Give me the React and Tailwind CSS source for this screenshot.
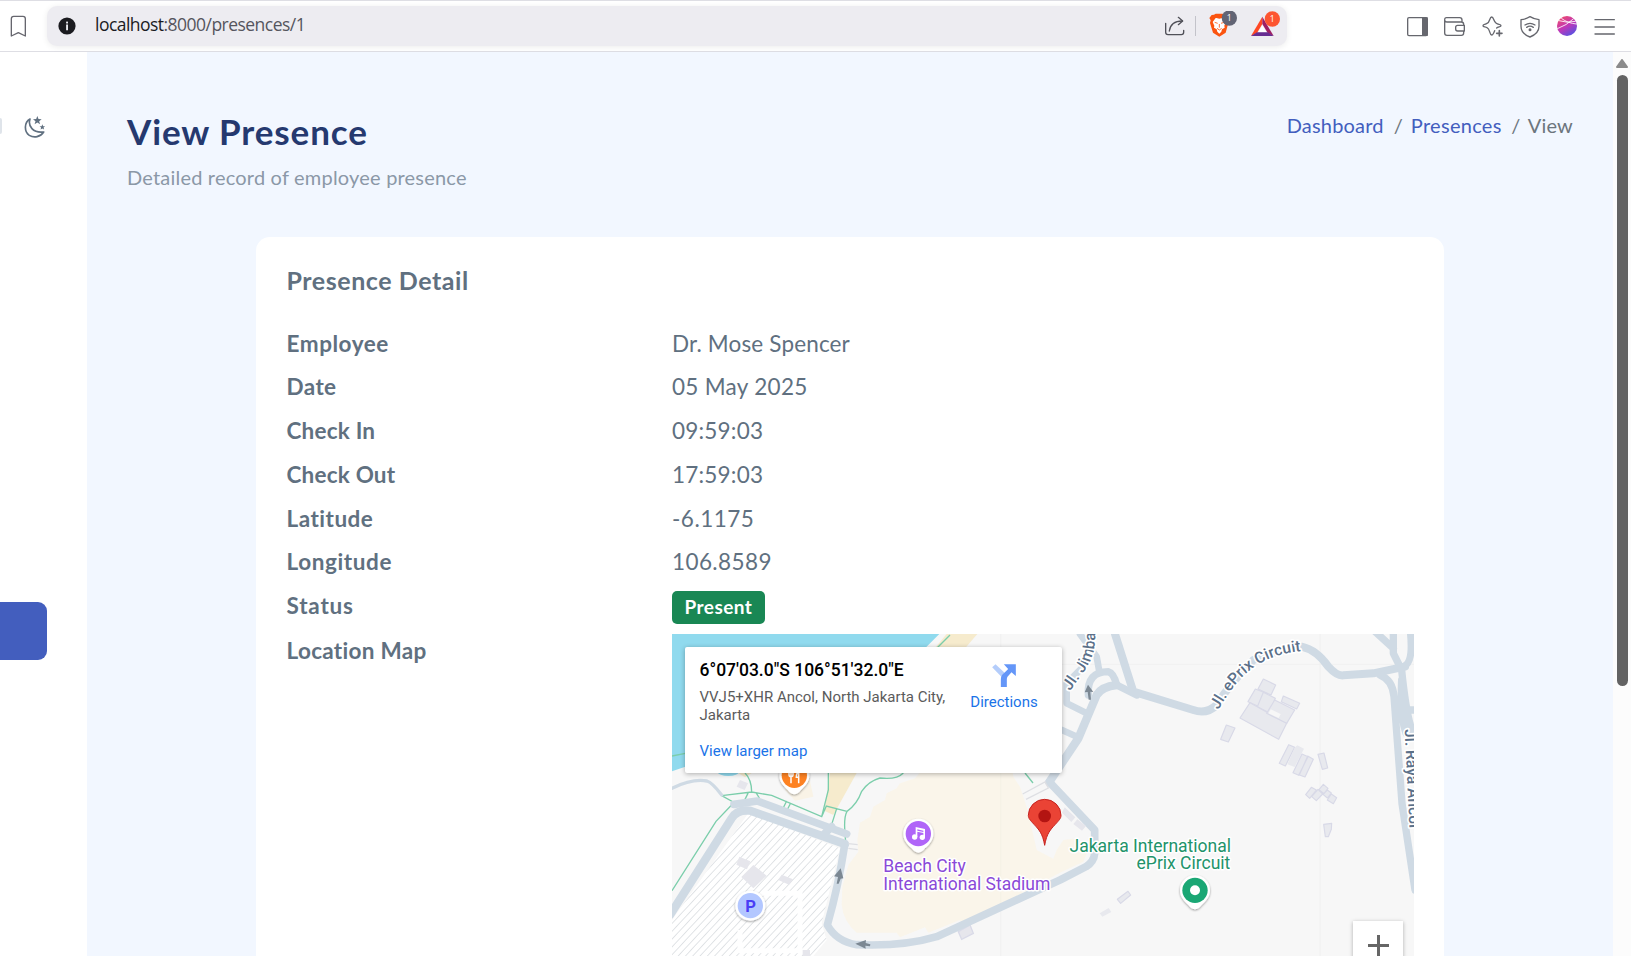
import React from "react";

const rows = [
  ["Employee", "Dr. Mose Spencer", "tracking-[0.55px]", "tracking-[0.15px]"],
  ["Date", "05 May 2025", "tracking-[0.4px]", "tracking-[0.3px]"],
  ["Check In", "09:59:03", "tracking-[0.2px]", "tracking-[0.2px]"],
  ["Check Out", "17:59:03", "tracking-[0.2px]", "tracking-[0.2px]"],
  ["Latitude", "-6.1175", "tracking-[0.5px]", "tracking-[0.5px]"],
  ["Longitude", "106.8589", "tracking-[0.6px]", "tracking-[0.4px]"],
];

function BrowserBar() {
  return (
    <header className="flex h-[52px] shrink-0 items-start border-b border-t border-[#dedee4] bg-white">
      <svg className="ml-2 mt-3 h-[27px] w-[22px]" viewBox="24 39 66 81" fill="none">
        <path d="M34 108V56q0-7 7-7h28q7 0 7 7v52L55 98Z" stroke="#66666e" strokeWidth="4" strokeLinejoin="round" />
      </svg>
      <div className="ml-[17px] mt-[5px] flex h-10 w-[1240px] items-center rounded-[10px] bg-[#edecf1] pr-[6px] shadow-[0_1px_6px_rgba(0,0,0,0.08)]">
        <svg className="ml-[11px] h-[18px] w-[18px]" viewBox="0 0 18 18">
          <circle cx="9" cy="9" r="8.6" fill="#1b1b20" />
          <rect x="8.1" y="4.6" width="1.9" height="1.9" rx=".6" fill="#e8e8ee" />
          <path d="M8.1 7.6H10V13.2H8.1z" fill="#e8e8ee" />
        </svg>
        <span className="mb-[2px] ml-[19px] font-['Open_Sans',sans-serif] text-[17.5px] leading-none tracking-[-0.53px] text-[#55555d]">
          <span className="text-[#1b1b22]">localhost</span>:8000/presences/1
        </span>
        <svg className="ml-auto h-[23px] w-[21px]" viewBox="72 45 63 69" fill="none" stroke="#505058" strokeWidth="4" strokeLinecap="round" strokeLinejoin="round">
          <path d="M77 70V97q0 7 7 7h40q7 0 7-7v-6" />
          <path d="M88 93q4-30 39-30" />
          <path d="M115 52l13 11-13 11" />
        </svg>
        <span className="ml-[10px] h-5 w-px bg-[#c3c3ca]" />
        <svg className="ml-[12px] h-[30px] w-[30px]" viewBox="204 33 90 90">
          <path d="M222 44l5-3h21l5 3 8 1 5 9-2 7 1 8-8 29-19 12-19-12-9-29 2-8-4-7 7-9Z" fill="#fb5410" />
          <path d="M229 54l9 2 9-2 10 12-4 11 1 6-8 5-2 7-6 6-6-6-2-7-8-5 1-6-5-11 9-12Z" fill="#fff" />
          <path d="M224 67l9 3M252 67l-9 3M238 72v11M231 85l7 5 7-5" stroke="#fb5410" strokeWidth="2.500" fill="none" />
          <circle cx="268" cy="54" r="23" fill="#626474" />
          <text x="268" y="63" textAnchor="middle" fontFamily="Open Sans" fontSize="26" fill="#fff">1</text>
        </svg>
        <svg className="ml-[12px] h-[30px] w-[31px]" viewBox="330 33 93 90">
          <path d="M367 50L333 108l18-9 16-27Z" fill="#ff4724" />
          <path d="M367 50l34 58-18-9-16-27Z" fill="#9e1f63" />
          <path d="M333 108h68l-18-11h-32Z" fill="#662d91" />
          <path d="M367 76l12 20h-24Z" fill="#fff" />
          <circle cx="397" cy="57" r="23" fill="#fd5530" />
          <text x="397" y="66" textAnchor="middle" fontFamily="Open Sans" fontSize="26" fill="#fff">1</text>
        </svg>
      </div>
      <div className="ml-[119px] mt-[14px] flex h-[23px] items-start">
        <svg className="h-[23px] w-[23px]" viewBox="798 45 69 69">
          <rect x="803" y="53" width="59" height="54" rx="4" fill="none" stroke="#66676e" strokeWidth="4" />
          <path d="M846 52h17v56h-17z" fill="#66676e" />
        </svg>
        <svg className="ml-[14px] h-[23px] w-[23px]" viewBox="909 45 69 69" fill="none" stroke="#66676e" strokeWidth="4" strokeLinejoin="round">
          <path d="M914 61V99q0 7 7 7h43q7 0 7-7V73q0-7-7-7H921q-7 0-7-7t7-6h38q7 0 7 7v5" />
          <path d="M973 76H953q-6 0-6 6v5q0 6 6 6h20Z" fill="#fff" />
        </svg>
        <svg className="ml-[15px] h-[23px] w-[23px]" viewBox="1023 45 69 69" fill="none" stroke="#66676e" strokeWidth="4" strokeLinecap="round" strokeLinejoin="round">
          <path d="M1064 92Q1059 105 1055 105C1048 105 1051 87 1041 83 1035 80 1029 81 1029 77 1029 73 1036 74 1041 70 1051 66 1048 51 1055 51 1062 51 1060 66 1069 70 1074 74 1083 73 1083 77 1083 81 1074 80 1070 84" />
          <path d="M1078 92v16M1070 100h16" strokeWidth="5" />
        </svg>
        <svg className="ml-[15px] h-[24px] w-[23px]" viewBox="1137 42 69 72" fill="none" stroke="#66676e" strokeWidth="4" strokeLinecap="round" strokeLinejoin="round">
          <path d="M1170 47q13 8 27 9v20q0 22-27 32-27-10-27-32V56q14-1 27-9Z" />
          <path d="M1155 72q15-10 30 0M1160 79q10-7 20 0" />
          <circle cx="1170" cy="86" r="2.5" fill="#66676e" />
        </svg>
        <svg className="ml-[14px] h-[22px] w-[22px]" viewBox="1248 45 66 66">
          <defs>
            <linearGradient id="orb" x1="0.2" y1="0" x2="0.8" y2="1">
              <stop offset="0" stopColor="#ef4a6c" />
              <stop offset=".5" stopColor="#bf37b8" />
              <stop offset="1" stopColor="#4c55e6" />
            </linearGradient>
          </defs>
          <circle cx="1281" cy="78" r="30" fill="url(#orb)" />
          <path d="M1252 86Q1280 76 1301 56M1264 55Q1284 70 1310 72M1257 62Q1280 70 1307 64" stroke="#fff" strokeWidth="2.500" fill="none" />
        </svg>
        <svg className="ml-[16px] h-[22px] w-[22px]" viewBox="1362 45 66 66" stroke="#66676e" strokeWidth="4" strokeLinecap="round">
          <path d="M1365 59h58M1365 81h58M1365 102h58" />
        </svg>
      </div>
    </header>
  );
}

function Sidebar() {
  return (
    <aside className="flex w-[87px] shrink-0 flex-col bg-white">
      <div className="mt-16 flex h-[22px] items-start">
        <span className="mt-[2px] h-[16px] w-[2px] rounded-r-[2px] bg-[#dfe4ea]" />
        <svg className="ml-[22px] h-[22px] w-[22px]" viewBox="69 348 66 66">
          <path d="M87 357c-18 10-18 38-2 49 14 9 34 5 43-10-32 4-48-18-41-39Z" fill="none" stroke="#607080" strokeWidth="5" strokeLinejoin="round" />
          <path d="M109 348l3.500 9 9.500 .5-7.500 6 2.700 9-8.200-5-8.200 5 2.700-9-7.500-6 9.500-.5Z" fill="#607080" />
          <path d="M124 373l2.300 5.500 6 .4-4.600 3.900 1.500 5.900-5.200-3.200-5.200 3.200 1.500-5.900-4.600-3.900 6-.4Z" fill="#607080" />
        </svg>
      </div>
      <div className="mt-[464px] h-[58px] w-[47px] rounded-r-[9px] bg-[#435ebe]" />
    </aside>
  );
}

function PoiPin({ x, y, color, children }) {
  return (
    <g transform={`translate(${x} ${y})`}>
      <path d="M-45 0a45 45 0 1 1 90 0c0 20-12 32-25 44q-20 26-40 0c-13-12-25-24-25-44Z" fill="#fff" filter="url(#pinShadow)" />
      <circle r="38" fill={color} />
      {children}
    </g>
  );
}

function MapCanvas() {
  return (
    <svg className="block h-[322px] w-[742px]" viewBox="6 42 2226 966">
      <defs>
        <filter id="pinShadow" x="-30%" y="-30%" width="160%" height="160%">
          <feDropShadow dx="0" dy="3" stdDeviation="3" floodOpacity=".4" />
        </filter>
        <pattern id="hatch" width="16" height="16" patternUnits="userSpaceOnUse" patternTransform="rotate(43)">
          <path d="M0 0V16" stroke="#dcdfe3" strokeWidth="5" />
        </pattern>
        <path id="eprixRoad" d="M1645 270C1700 175 1760 104 1900 93" />
        <path id="jimbaranRoad" d="M1200 214L1245 150C1268 115 1280 80 1274 20V-200" />
        <path id="rayaRoad" d="M2204 328L2222 700" />
      </defs>
      <rect x="6" y="42" width="2226" height="966" fill="#f7f7f7" />
      <path d="M992 42V1008M1950 42V1008M6 133H2232" stroke="#eeeeee" strokeWidth="2" />

      <path d="M830 42H922L700 300 560 459 490 585 463 572 480 459Z" fill="#f6ebcd" />
      <path d="M6 42H808L760 90 300 440 46 440 6 454Z" fill="#90daee" />
      <ellipse cx="175" cy="456" rx="32" ry="12" fill="#90daee" />
      <path d="M205 459H245L225 472Z" fill="#f6ebcd" />
      <path d="M345 459H415L430 530 375 542 345 510Z" fill="#f9f3e6" />

      <path d="M765 440H1026L1030 470 1050 500 1065 545 1075 580 1100 690 1150 716 1160 690 1180 660 1220 655 1255 690 1240 725 1170 758 878 915 870 900 775 938 765 922 690 952 680 938 560 938Q520 905 515 855L517 800 535 735 565 695 562 660 570 608 600 590 610 560 645 540 650 520 680 505 690 490 735 475Z" fill="#faf5ea" />
      <path d="M992 440V850" stroke="#f3eee3" strokeWidth="2" />

      <path d="M235 580L510 685 455 910 470 960 430 1008H6V900Z" fill="#fff" />
      <path d="M235 580L510 685 455 910 470 960 430 1008H6V900Z" fill="url(#hatch)" />
      <path d="M275 820H390V992H210V930" fill="none" stroke="#fff" strokeWidth="15" />
      <g fill="#e6e6ec">
        <path d="M250 735l40 32-40 38-36-34Z" />
        <path d="M208 710l33 14-10 24-32-14Z" />
        <path d="M335 764l34 14-12 16-32-14Z" />
        <path d="M210 480l24 10-10 20-24-10Z" />
        <path d="M398 990h22v18h-22Z" />
      </g>
      <path d="M865 935l35-20 10 25-35 18Z" fill="#e6e6ec" stroke="#d9dae8" strokeWidth="4" />

      <g fill="none" stroke="#7bceab" strokeWidth="4">
        <path d="M6 408l40-8M6 812L138 604l46-48M840 45L780 105" />
        <path d="M155 527l90-11 60 10 150 64 20-80V459M225 459q20 20 20 57M155 527l40 22M235 518l-10 20M258 518l10 16M350 543l-12 24M362 549l-12 24M455 590l14-32 62 16M500 566l-14 44M531 574q-12 20-4 90M531 574q30-20 44-60 20-30 55-40 50 6 70-15M1065 459l24 30" />
      </g>

      <g fill="none" stroke="#cfdae4" strokeLinecap="round" strokeLinejoin="round">
        <path d="M6 505q60-30 105-22 15 4 44 42" strokeWidth="10" />
        <path d="M0 885L185 595Q200 568 240 572L525 672" strokeWidth="25" />
        <path d="M192 553L262 543 530 642M465 640l20-20" strokeWidth="23" />
        <path d="M524 675Q505 800 472 915 500 965 560 974 700 980 800 950L1170 780 1248 740Q1272 725 1274 700V630L1138 486" strokeWidth="23" />
        <path d="M1138 486L1225 355 1280 225Q1295 200 1340 195" strokeWidth="25" />
        <path d="M1255 225Q1250 155 1315 155 1332 160 1340 195L1400 225" strokeWidth="22" />
        <path d="M1335 42L1390 215 1570 270Q1610 284 1640 255 1680 190 1750 120L1820 95 1895 80Q1940 90 1975 140 2000 168 2020 166L2110 160 2205 140" strokeWidth="24" />
        <path d="M1230 42L1280 110 1288 155M1240 140l-50 50V250L1250 280M1176 330l48 22" strokeWidth="20" />
        <path d="M2110 30L2170 85M2170 42V100L2195 150Q2210 300 2232 345M2222 42Q2230 130 2200 140M2130 165Q2168 180 2172 230L2196 550 2235 810M2195 180Q2190 290 2208 340M2208 270H2232" strokeWidth="22" />
      </g>
      <path d="M1058 522l67-36 10 18-67 34M535 671l28 3M535 685l28 4" fill="none" stroke="#dedfe3" strokeWidth="4" />
      <path d="M1184 562l32 30-12 14-28-28ZM1222 598l26 20-12 14-26-20Z" fill="#e6e6ec" />

      <g transform="translate(1140 0)" fill="#e8e9ee" stroke="#d8d9e7" strokeWidth="3.500" strokeLinejoin="round">
        <path d="M640 177l37 18-14 30-39-18Z" />
        <path d="M616 207l36 14-22 40-36-16Z" />
        <path d="M640 217l36 18-18 43-36-18Z" />
        <path d="M600 248l110 62-24 48-116-64Z" />
        <path d="M674 240l60 30-24 40-60-30ZM700 228l49 22-9 17-46-22Z" />
        <path d="M662 268l30 14-6 12-30-14Z" fill="#f7f7f7" stroke="none" />
        <path d="M529 315l26 9-20 42-23-8Z" />
        <path d="M716 374l18 8-28 56-18-8Z" />
        <path d="M742 376l20 10-28 55-22-8 22-50Z" stroke="none" />
        <path d="M756 402l18 8-28 56-17-8ZM773 408l17 10-25 53-17-6Z" />
        <path d="M804 403l18-4 11 45-16 4Z" />
        <path d="M784 502l15 8-20 25-12-11ZM804 508l14 14-19 20-14-12ZM820 493l14 12-12 16-15-12ZM832 510l12 9-12 15-13-11ZM844 522l16 11-10 18-18-11Z" />
        <path d="M821 613l24-3-1 18-9 22h-9Z" />
        <path d="M234 814l8 11-30 25-10-12Z" />
        <path d="M176 864l8 12-27 14-8-10Z" stroke="none" />
      </g>

      <g fill="#7c8893">
        <path d="M512 745l8 30-8 1-6 15h-6l4-20-12-2ZM556 971l32-11-1 9 14 4-1 6-14-2 1 9Z" />
        <path d="M1254 194l16 22-9-1 2 24h-7l-3-23-9 1Z" />
      </g>

      <g fontFamily="Roboto, sans-serif" fontWeight="500" fontSize="47" fill="#5b7089" stroke="#fff" strokeWidth="10" strokeLinejoin="round" paintOrder="stroke">
        <text><textPath href="#eprixRoad">Jl. ePrix Circuit</textPath></text>
        <text letterSpacing=".5"><textPath href="#jimbaranRoad">Jl. Jimbaran</textPath></text>
        <text><textPath href="#rayaRoad">Jl. Raya Ancol</textPath></text>
      </g>

      <PoiPin x={373} y={466} color="#fd8222">
        <path d="M-16-14v12q0 6 6 6v20M-10-14v16M-4-14v12q0 6-6 6M13 24V-10q-7 2-7 16h7" fill="none" stroke="#fff" strokeWidth="4.500" />
      </PoiPin>
      <PoiPin x={745} y={641} color="#b065f8">
        <g fill="#fff">
          <circle cx="-11" cy="10" r="8" />
          <circle cx="12" cy="11" r="8" />
          <path fillRule="evenodd" d="M-8 10V-20L20-14V11H15V-2L-3-6V10ZM-3-13V-9L15-5V-9Z" />
        </g>
      </PoiPin>
      <PoiPin x={1575} y={811} color="#1aa774">
        <circle r="15" fill="#fff" />
      </PoiPin>
      <g>
        <circle cx="241" cy="857" r="45" fill="#fff" filter="url(#pinShadow)" />
        <circle cx="241" cy="857" r="38" fill="#b3c7ff" />
        <text x="242" y="875" textAnchor="middle" fontFamily="Roboto, sans-serif" fontWeight="700" fontSize="50" fill="#4a3df5">P</text>
      </g>
      <path d="M1124 676C1118 640 1106 628 1092 613 1080 600 1075 595 1075 586A49 48 0 0 1 1173 586C1173 595 1168 600 1156 613 1142 628 1130 640 1124 676Z" fill="#ea4335" stroke="#c5221f" strokeWidth="3" />
      <circle cx="1124" cy="588" r="19" fill="#b31412" />

      <g fontFamily="Roboto, sans-serif" fontSize="52.500" stroke="#fff" strokeWidth="9" strokeLinejoin="round" paintOrder="stroke">
        <text x="640" y="756" fill="#8a49d8">Beach City</text>
        <text x="640" y="810" fill="#8a49d8" textLength="501">International Stadium</text>
        <text x="1683" y="696" textAnchor="end" fill="#22936a">Jakarta International</text>
        <text x="1681" y="748" textAnchor="end" fill="#22936a">ePrix Circuit</text>
      </g>
    </svg>
  );
}

function LocationMap() {
  return (
    <div className="relative h-[322px] w-[742px] overflow-hidden font-['Roboto',sans-serif] tracking-normal">
      <MapCanvas />
      <div className="absolute left-[13px] top-[13px] flex h-[126px] w-[377px] rounded-[2px] bg-white shadow-[0_1px_5px_rgba(0,0,0,0.3)]">
        <div className="w-[262px] shrink-0 pl-[14.500px] pt-[12px]">
          <div className="whitespace-nowrap text-[17.5px] font-medium leading-[22px] text-black">6°07'03.0"S 106°51'32.0"E</div>
          <div className="mt-[7px] whitespace-nowrap text-[15px] leading-[18px] text-[#5b5b5b]">
            VVJ5+XHR Ancol, North Jakarta City,
            <br />
            Jakarta
          </div>
          <div className="mt-[18px] text-[15px] leading-[18px] text-[#1a73e8]">View larger map</div>
        </div>
        <div className="ml-[16px] flex w-[82px] flex-col items-center pt-[15px]">
          <svg className="h-[27px] w-[27px]" viewBox="963.5 126 81 81">
            <path d="M967 142l10-9 32 30-10 12Z" fill="#b4cdfb" />
            <path d="M993 201V179q0-13 10-20l12-12-13-14h36v35l-13-11-12 13q-2 3-2 8v23Z" fill="#6496f8" />
          </svg>
          <span className="mt-[4px] text-[15px] leading-[18px] text-[#1a73e8]">Directions</span>
        </div>
      </div>
      <div className="absolute left-[681px] top-[287px] flex h-[50px] w-[50px] items-center justify-center bg-white shadow-[0_1px_4px_rgba(0,0,0,0.3)]">
        <span className="absolute h-[3px] w-[21px] bg-[#666]" />
        <span className="absolute h-[21px] w-[3px] bg-[#666]" />
      </div>
    </div>
  );
}

export default function App() {
  return (
    <div className="flex h-[956px] w-[1631px] flex-col overflow-hidden bg-white font-['Lato',sans-serif]">
      <BrowserBar />
      <div className="flex min-h-0 flex-1">
        <Sidebar />
        <main className="flex w-[1526px] shrink-0 flex-col bg-[#f2f7ff] pl-10 pr-[40px]">
          <div className="flex items-start justify-between pt-[58px]">
            <div>
              <h1 className="text-[35px] font-bold leading-[42px] tracking-[0.9px] text-[#25396f]">View Presence</h1>
              <p className="mt-[10px] text-[20px] leading-[30px] tracking-[0.2px] text-[#8b98a7]">Detailed record of employee presence</p>
            </div>
            <nav className="flex text-[20px] leading-[30px] tracking-[0.2px] text-[#6c757d]">
              <a className="text-[#435ebe]">Dashboard</a>
              <span className="mx-[10px] w-[7px] text-center">/</span>
              <a className="tracking-[0.3px] text-[#435ebe]">Presences</a>
              <span className="mx-[9.500px] w-[7px] text-center">/</span>
              <span>View</span>
            </nav>
          </div>
          <section className="ml-[129px] mt-[45px] h-[760px] w-[1188px] shrink-0 rounded-t-[14px] bg-white px-[31px] pt-[28px] text-[22.5px] leading-[33.75px] text-[#607080]">
            <h2 className="-ml-[0.5px] text-[25px] font-bold leading-[30px] tracking-[0.55px]">Presence Detail</h2>
            <dl className="mt-[31.500px]">
              {rows.map(([label, value, ls, vs]) => (
                <div key={label} className="mb-[10px] flex">
                  <dt className={`-ml-[0.5px] w-[385.5px] shrink-0 font-bold ${ls}`}>{label}</dt>
                  <dd className={vs}>{value}</dd>
                </div>
              ))}
              <div className="mb-[10px] flex h-[34.500px] items-start">
                <dt className="-ml-[0.5px] w-[385.5px] shrink-0 font-bold tracking-[0.8px]">Status</dt>
                <dd className="mt-[1.500px] flex h-[33px] items-center rounded-[5px] bg-[#198754] px-[12.500px] pb-[2px] text-[19px] font-bold leading-none tracking-[0.45px] text-white">Present</dd>
              </div>
              <div className="flex items-start">
                <dt className="-ml-[0.5px] w-[385.5px] shrink-0 font-bold tracking-[0.3px]">Location Map</dt>
                <dd>
                  <LocationMap />
                </dd>
              </div>
            </dl>
          </section>
        </main>
        <div className="flex w-[18px] shrink-0 flex-col items-center bg-[#fcfcfc] pt-[7px]">
          <svg className="h-[9px] w-3" viewBox="0 0 12 9">
            <path d="M6 1L11 8H1Z" fill="#8b8b8b" stroke="#8b8b8b" strokeWidth="2" strokeLinejoin="round" />
          </svg>
          <div className="mt-[7px] h-[611px] w-[11px] rounded-full bg-[#636363]" />
        </div>
      </div>
    </div>
  );
}
